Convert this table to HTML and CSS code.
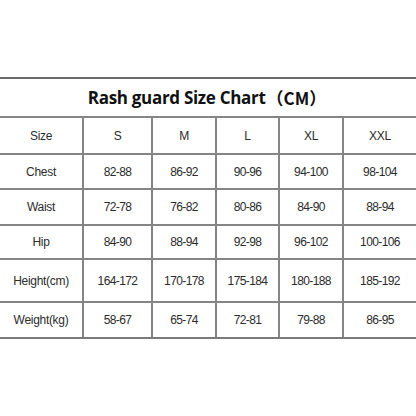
FILE: index.html
```html
<!DOCTYPE html>
<html>
<head>
<meta charset="utf-8">
<link rel="stylesheet" href="styles.css">
</head>
<body>
<div class="chart">
  <div class="title">Rash guard Size Chart<span class="paren">（CM）</span></div>
  <div class="cell label">Size</div><div class="cell">S</div><div class="cell">M</div><div class="cell">L</div><div class="cell">XL</div><div class="cell">XXL</div>
  <div class="cell label">Chest</div><div class="cell num">82-88</div><div class="cell num">86-92</div><div class="cell num">90-96</div><div class="cell num">94-100</div><div class="cell num">98-104</div>
  <div class="cell label">Waist</div><div class="cell num">72-78</div><div class="cell num">76-82</div><div class="cell num">80-86</div><div class="cell num">84-90</div><div class="cell num">88-94</div>
  <div class="cell label">Hip</div><div class="cell num">84-90</div><div class="cell num">88-94</div><div class="cell num">92-98</div><div class="cell num">96-102</div><div class="cell num">100-106</div>
  <div class="cell label">Height(cm)</div><div class="cell num">164-172</div><div class="cell num">170-178</div><div class="cell num">175-184</div><div class="cell num">180-188</div><div class="cell num">185-192</div>
  <div class="cell label">Weight(kg)</div><div class="cell num">58-67</div><div class="cell num">65-74</div><div class="cell num">72-81</div><div class="cell num">79-88</div><div class="cell num">86-95</div>
</div>
</body>
</html>
```
FILE: styles.css
```css
html, body {
  margin: 0;
  padding: 0;
  background: #ffffff;
}
body {
  width: 416px;
  height: 416px;
  overflow: hidden;
}
.chart {
  margin-top: 77px;
  display: grid;
  grid-template-columns: 82px 67px 62px 61px 62px 72px;
  grid-template-rows: 37px 35px 33px 34px 32px 41px 34px;
  gap: 2px;
  background: #858585;
  border-top: 2px solid #6a6a6a;
  border-bottom: 2px solid #7a7a7a;
}
.title {
  grid-column: 1 / -1;
  background: #fff;
  display: flex;
  align-items: center;
  justify-content: center;
  padding-right: 2px;
  font-family: "Open Sans", "Noto Sans CJK SC", sans-serif;
  font-weight: 700;
  font-size: 17px;
  color: #111;
  letter-spacing: -0.3px;
}
.paren {
  font-family: "Noto Sans CJK SC", sans-serif;
  font-weight: 700;
  letter-spacing: 0;
  margin-left: 1px;
}
.cell {
  background: #fff;
  display: flex;
  align-items: center;
  justify-content: center;
  font-family: "Liberation Sans", Arial, sans-serif;
  font-size: 12px;
  color: #2b2b2b;
  letter-spacing: -0.3px;
}
.num {
  letter-spacing: -0.6px;
}
```
